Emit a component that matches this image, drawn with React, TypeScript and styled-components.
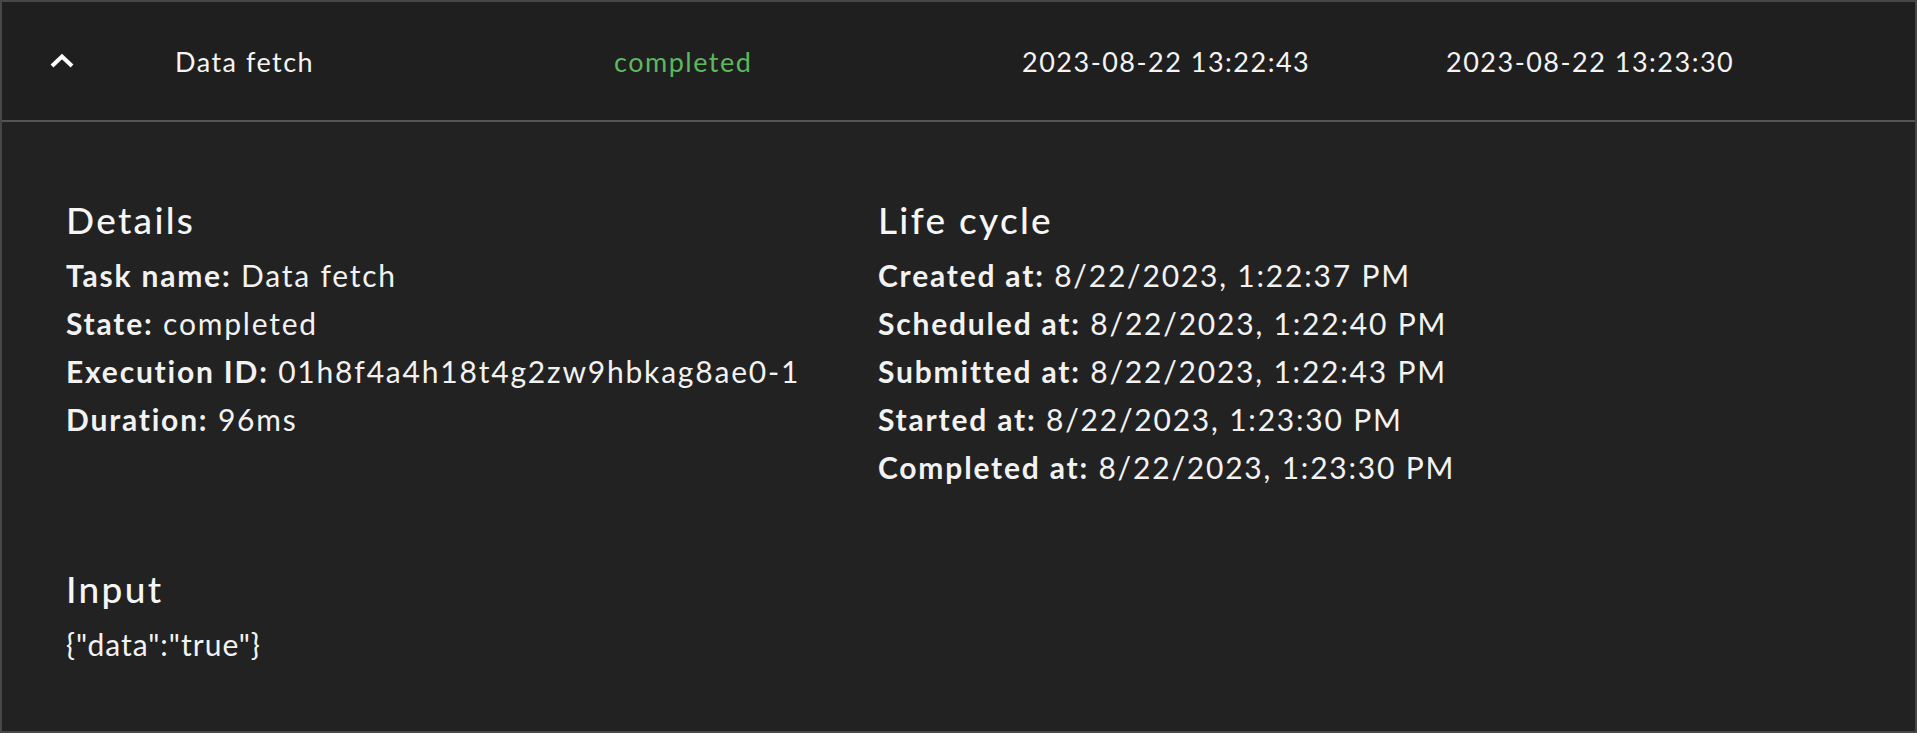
import React, { useState } from "react";
import styled, { createGlobalStyle } from "styled-components";

const GlobalStyle = createGlobalStyle`
  * {
    box-sizing: border-box;
  }
  html, body {
    margin: 0;
    padding: 0;
    background: #222222;
  }
  body {
    font-family: Lato, "Open Sans", "Noto Sans", sans-serif;
    color: #f2f2f2;
  }
`;

const Panel = styled.div`
  min-height: 100vh;
  border: 2px solid #474747;
  background: #222222;
  display: flex;
  flex-direction: column;
`;

const HeaderRow = styled.div`
  display: grid;
  grid-template-columns: 173px 439px 408px 424px 1fr;
  align-items: center;
  height: 120px;
  background: #1f1f1f;
  border-bottom: 2px solid #555555;
  font-size: 27px;
  letter-spacing: 1.5px;
`;

const ToggleButton = styled.button`
  display: flex;
  align-items: center;
  background: none;
  border: none;
  padding: 0 0 0 47px;
  cursor: pointer;
  color: #ffffff;
`;

const Cell = styled.div<{ $tone?: "ok" }>`
  color: ${(p) => (p.$tone === "ok" ? "#5cb85c" : "#f4f4f4")};
  white-space: nowrap;
`;

const Body = styled.div`
  flex: 1;
  padding: 76px 64px 40px;
  display: flex;
  flex-direction: column;
  gap: 76px;
`;

const Columns = styled.div`
  display: grid;
  grid-template-columns: 812px 1fr;
`;

const Section = styled.section`
  display: flex;
  flex-direction: column;
`;

const Heading = styled.h2`
  margin: 0 0 9px;
  font-size: 37px;
  line-height: 44px;
  font-weight: 500;
  letter-spacing: 2.3px;
  color: #f6f6f6;
`;

const Item = styled.div`
  font-size: 30px;
  line-height: 48px;
  letter-spacing: 1.8px;
  white-space: nowrap;
`;

const Label = styled.span`
  font-weight: 700;
`;

const Code = styled.div`
  font-size: 30px;
  line-height: 48px;
  letter-spacing: 1px;
`;

const Chevron = ({ open }: { open: boolean }) => (
  <svg
    width="26"
    height="16"
    viewBox="0 0 26 16"
    style={{ transform: open ? "none" : "rotate(180deg)" }}
  >
    <polyline
      points="3,13 13,3.5 23,13"
      fill="none"
      stroke="currentColor"
      strokeWidth="4"
      strokeLinejoin="miter"
    />
  </svg>
);

const details = [
  ["Task name:", "Data fetch"],
  ["State:", "completed"],
  ["Execution ID:", "01h8f4a4h18t4g2zw9hbkag8ae0-1"],
  ["Duration:", "96ms"],
];

const lifeCycle = [
  ["Created at:", "8/22/2023, 1:22:37 PM"],
  ["Scheduled at:", "8/22/2023, 1:22:40 PM"],
  ["Submitted at:", "8/22/2023, 1:22:43 PM"],
  ["Started at:", "8/22/2023, 1:23:30 PM"],
  ["Completed at:", "8/22/2023, 1:23:30 PM"],
];

const App = () => {
  const [open, setOpen] = useState(true);

  return (
    <>
      <GlobalStyle />
      <Panel>
        <HeaderRow>
          <ToggleButton onClick={() => setOpen(!open)}>
            <Chevron open={open} />
          </ToggleButton>
          <Cell>Data fetch</Cell>
          <Cell $tone="ok">completed</Cell>
          <Cell>2023-08-22 13:22:43</Cell>
          <Cell>2023-08-22 13:23:30</Cell>
        </HeaderRow>

        {open && (
          <Body>
            <Columns>
              <Section>
                <Heading>Details</Heading>
                {details.map(([label, value]) => (
                  <Item key={label}>
                    <Label>{label}</Label> {value}
                  </Item>
                ))}
              </Section>
              <Section>
                <Heading>Life cycle</Heading>
                {lifeCycle.map(([label, value]) => (
                  <Item key={label}>
                    <Label>{label}</Label> {value}
                  </Item>
                ))}
              </Section>
            </Columns>

            <Section>
              <Heading>Input</Heading>
              <Code>{'{"data":"true"}'}</Code>
            </Section>
          </Body>
        )}
      </Panel>
    </>
  );
};

export default App;
